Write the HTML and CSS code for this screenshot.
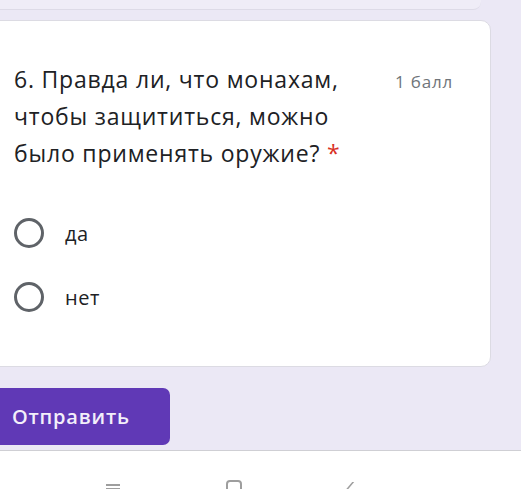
FILE: index.html
```html
<!DOCTYPE html>
<html lang="ru">
<head>
    <meta charset="UTF-8">
    <meta name="viewport" content="width=device-width, initial-scale=1.0">
    <title>Тест</title>
    <link rel="stylesheet" href="styles.css">
</head>
<body>
    <div class="page">
        <!-- Край предыдущей карточки -->
        <div class="prev-card"></div>

        <!-- Вопрос -->
        <div class="card">
            <div class="question-head">
                <div class="question-title">6. Правда ли, что монахам, чтобы защититься, можно было применять оружие? <span class="required">*</span></div>
                <div class="question-score">1 балл</div>
            </div>

            <div class="options">
                <label class="option">
                    <span class="radio"></span>
                    <span class="option-text">да</span>
                </label>
                <label class="option">
                    <span class="radio"></span>
                    <span class="option-text">нет</span>
                </label>
            </div>
        </div>

        <div class="actions">
            <button class="submit-btn">Отправить</button>
        </div>
    </div>

    <!-- Навигация телефона -->
    <div class="nav-bar">
        <span class="nav-icon nav-recent"></span>
        <span class="nav-icon nav-home"></span>
        <span class="nav-icon nav-back"></span>
    </div>
</body>
</html>
```
FILE: styles.css
```css
/* Общие стили */
body {
    margin: 0;
    padding: 0;
    background: #ebe8f5;
    font-family: "Open Sans", Roboto, sans-serif;
    color: #202124;
    height: 489px;
    overflow: hidden;
    display: flex;
    flex-direction: column;
}

.page {
    flex: 1;
}

.prev-card {
    height: 9px;
    margin-right: 40px;
    background: #efedf7;
    border-bottom: 1px solid #dddbe7;
    border-bottom-right-radius: 8px;
}

.card {
    margin: 10px 30px 0 -10px;
    padding: 40px 24px 45px 23px;
    background: #ffffff;
    border: 1px solid #dcdbe3;
    border-radius: 10px;
}

.question-head {
    display: flex;
    align-items: baseline;
}

.question-title {
    width: 345px;
    flex-shrink: 0;
    font-size: 23px;
    letter-spacing: 0.8px;
    line-height: 37px;
    color: #202124;
}

.required {
    color: #d93025;
}

.question-score {
    margin-left: 36px;
    font-size: 17px;
    letter-spacing: 0.8px;
    color: #70757a;
    white-space: nowrap;
}

/* Варианты ответа */
.options {
    margin-top: 37px;
    display: flex;
    flex-direction: column;
    gap: 16px;
}

.option {
    display: flex;
    align-items: center;
    height: 48px;
}

.radio {
    width: 24px;
    height: 24px;
    border: 3px solid #5f6368;
    border-radius: 50%;
}

.option-text {
    margin-left: 21px;
    font-size: 20px;
    letter-spacing: 0.5px;
    color: #202124;
}

/* Кнопка отправки */
.actions {
    margin-top: 21px;
}

.submit-btn {
    margin-left: -10px;
    width: 180px;
    height: 57px;
    padding: 0 0 0 22px;
    text-align: left;
    background: #6039b6;
    border: none;
    border-radius: 7px;
    color: #f3effa;
    font-family: "Open Sans", Roboto, sans-serif;
    font-size: 20px;
    font-weight: 600;
    letter-spacing: 0.8px;
}

/* Нижняя панель */
.nav-bar {
    height: 38px;
    background: #ffffff;
    border-top: 1px solid #cfcfd4;
    position: relative;
}

.nav-icon {
    position: absolute;
    top: 29px;
}

.nav-recent {
    left: 106px;
    width: 14px;
    height: 2px;
    border-top: 2px solid #9e9e9e;
    border-bottom: 2px solid #9e9e9e;
    top: 33px;
}

.nav-home {
    left: 226px;
    width: 12px;
    height: 14px;
    border: 2px solid #9e9e9e;
    border-radius: 4px;
}

.nav-back {
    left: 348px;
    width: 10px;
    height: 10px;
    border-left: 2px solid #9e9e9e;
    transform: skewX(-40deg);
    top: 31px;
}
```
